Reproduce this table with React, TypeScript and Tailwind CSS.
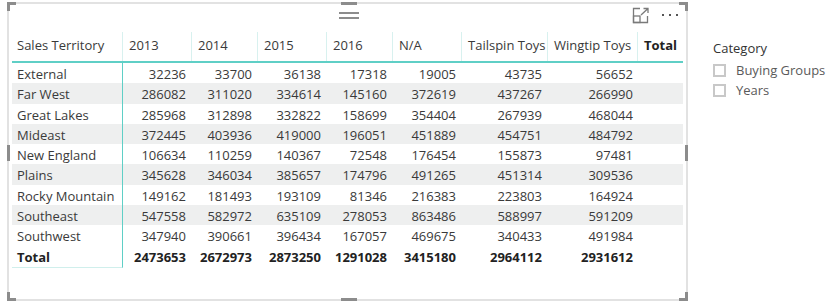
import React from "react";

interface Row {
  territory: string;
  values: number[];
}

const columns = ["2013", "2014", "2015", "2016", "N/A", "Tailspin Toys", "Wingtip Toys"];

const rows: Row[] = [
  { territory: "External", values: [32236, 33700, 36138, 17318, 19005, 43735, 56652] },
  { territory: "Far West", values: [286082, 311020, 334614, 145160, 372619, 437267, 266990] },
  { territory: "Great Lakes", values: [285968, 312898, 332822, 158699, 354404, 267939, 468044] },
  { territory: "Mideast", values: [372445, 403936, 419000, 196051, 451889, 454751, 484792] },
  { territory: "New England", values: [106634, 110259, 140367, 72548, 176454, 155873, 97481] },
  { territory: "Plains", values: [345628, 346034, 385657, 174796, 491265, 451314, 309536] },
  { territory: "Rocky Mountain", values: [149162, 181493, 193109, 81346, 216383, 223803, 164924] },
  { territory: "Southeast", values: [547558, 582972, 635109, 278053, 863486, 588997, 591209] },
  { territory: "Southwest", values: [347940, 390661, 396434, 167057, 469675, 340433, 491984] },
];

const totals = [2473653, 2672973, 2873250, 1291028, 3415180, 2964112, 2931612];

const grid = "grid grid-cols-[111px_69px_66px_69px_66px_69px_86px_90px_45px]";

function FocusIcon() {
  return (
    <svg width="18" height="17" viewBox="0 0 18 17" fill="none" stroke="#7a7a7a" strokeWidth="1.3">
      <path d="M8 1.5H1.5v14h14V9" />
      <rect x="1.5" y="9" width="6.5" height="6.5" />
      <path d="M9 8l7-6.5M11.5 1.5H16V6" />
    </svg>
  );
}

export default function App() {
  return (
    <div className="flex w-[840px] h-[305px] bg-white text-[13px] text-[#3a3a3a]" style={{ fontFamily: '"Open Sans", "Noto Sans", sans-serif' }}>
      {/* visual frame */}
      <div className="relative ml-[7px] mt-[2px] w-[681px] h-[299px] border-2 border-[#e2e2e2] bg-white">
        {/* handles */}
        <div className="absolute -left-[2px] -top-[2px] w-[9px] h-[3px] bg-[#8c8c8c]" />
        <div className="absolute -left-[2px] -top-[2px] w-[3px] h-[9px] bg-[#8c8c8c]" />
        <div className="absolute -right-[2px] -top-[2px] w-[9px] h-[3px] bg-[#8c8c8c]" />
        <div className="absolute -right-[2px] -top-[2px] w-[3px] h-[9px] bg-[#8c8c8c]" />
        <div className="absolute -left-[2px] -bottom-[2px] w-[9px] h-[3px] bg-[#8c8c8c]" />
        <div className="absolute -left-[2px] -bottom-[2px] w-[3px] h-[9px] bg-[#8c8c8c]" />
        <div className="absolute -right-[2px] -bottom-[2px] w-[9px] h-[3px] bg-[#8c8c8c]" />
        <div className="absolute -right-[2px] -bottom-[2px] w-[3px] h-[9px] bg-[#8c8c8c]" />
        <div className="absolute left-[332px] -top-[2px] w-[16px] h-[3px] bg-[#8c8c8c]" />
        <div className="absolute left-[332px] -bottom-[2px] w-[16px] h-[3px] bg-[#8c8c8c]" />
        <div className="absolute -left-[2px] top-[141px] w-[3px] h-[16px] bg-[#8c8c8c]" />
        <div className="absolute -right-[2px] top-[141px] w-[3px] h-[16px] bg-[#8c8c8c]" />
        <div className="absolute left-[330px] top-[8px] flex flex-col gap-[3px]">
          <div className="w-[20px] h-[2px] bg-[#8c8c8c]" />
          <div className="w-[20px] h-[2px] bg-[#8c8c8c]" />
        </div>
        <div className="absolute left-[623px] top-[3px]">
          <FocusIcon />
        </div>
        <div className="absolute left-[653px] top-[10px] flex gap-[5px]">
          <div className="w-[2px] h-[2px] bg-[#555]" />
          <div className="w-[2px] h-[2px] bg-[#555]" />
          <div className="w-[2px] h-[2px] bg-[#555]" />
        </div>

        {/* table */}
        <div className="ml-[3px] mt-[28px] w-[671px]">
          <div className={`${grid} h-[31px] border-b-2 border-[#5fcfc6]`}>
            <div className="flex items-center pl-[5px] pb-[2px] border-r border-[#d8f1ef]">Sales Territory</div>
            {columns.map((c) => (
              <div key={c} className="flex items-center pl-[6px] pb-[2px] border-r border-[#d8f1ef]">
                {c}
              </div>
            ))}
            <div className="flex items-center pl-[6px] pb-[2px] font-bold text-[#222]">Total</div>
          </div>
          {rows.map((r, i) => (
            <div key={r.territory} className={`${grid} h-[20.3px] ${i % 2 === 1 ? "bg-[#eeefef]" : ""}`}>
              <div className="flex items-center pl-[5px] pt-[2px] border-r border-[#5fcfc6]">{r.territory}</div>
              {r.values.map((v, j) => (
                <div key={j} className={`flex items-center justify-end pt-[2px] ${j === 6 ? "pr-[5px]" : "pr-[6px]"}`}>
                  {v}
                </div>
              ))}
              <div />
            </div>
          ))}
          <div className={`${grid} h-[20.3px] font-bold text-[#222]`}>
            <div className="flex items-center pl-[5px] pt-[2px] border-r border-b border-[#5fcfc6] border-b-[#d0efec]">Total</div>
            {totals.map((v, j) => (
              <div key={j} className={`flex items-center justify-end pt-[2px] ${j === 6 ? "pr-[5px]" : "pr-[6px]"}`}>
                {v}
              </div>
            ))}
            <div />
          </div>
        </div>
      </div>

      {/* slicer */}
      <div className="ml-[25px] mt-[39px] flex flex-col">
        <div className="text-[#333] leading-[18px]">Category</div>
        <div className="mt-[4px] flex items-center gap-[10px] h-[19px] text-[#5a5a5a]">
          <div className="w-[13px] h-[13px] border-2 border-[#c8c8c8]" />
          <span>Buying Groups</span>
        </div>
        <div className="mt-[1px] flex items-center gap-[10px] h-[19px] text-[#5a5a5a]">
          <div className="w-[13px] h-[13px] border-2 border-[#c8c8c8]" />
          <span>Years</span>
        </div>
      </div>
    </div>
  );
}
